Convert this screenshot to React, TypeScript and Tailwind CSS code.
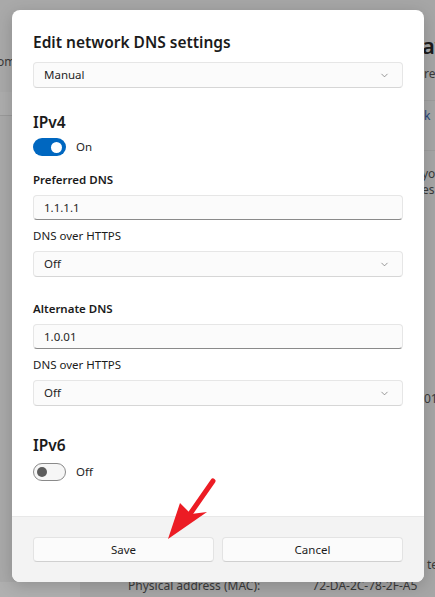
import { ChevronDown } from "lucide-react"

const font = { fontFamily: '"Segoe UI", "Noto Sans", Arial, sans-serif' }

function Select({ value }: { value: string }) {
  return (
    <div className="flex h-[26px] items-center justify-between rounded-[4px] border border-[#e6e6e6] border-b-[#d6d6d6] bg-[#fbfbfb] pl-[10px] pr-[12px]">
      <span className="text-[11.5px] text-[#1f1f1f]">{value}</span>
      <ChevronDown size={11} strokeWidth={1.5} className="text-[#6b6b6b]" />
    </div>
  )
}

function Input({ value }: { value: string }) {
  return (
    <div className="flex h-[25px] items-center rounded-[4px] border border-[#e6e6e6] border-b-[#8a8a8a] bg-[#fbfbfb] pl-[10px]">
      <span className="text-[11.5px] text-[#1f1f1f]">{value}</span>
    </div>
  )
}

function Toggle({ on }: { on: boolean }) {
  return (
    <div className="flex items-center gap-[10px]">
      {on ? (
        <div className="flex h-[18px] w-[33px] items-center justify-end rounded-full bg-[#0067c0] pr-[4px]">
          <div className="h-[11px] w-[11px] rounded-full bg-white" />
        </div>
      ) : (
        <div className="flex h-[18px] w-[33px] items-center rounded-full border border-[#8a8a8a] bg-[#f6f6f6] pl-[3px]">
          <div className="h-[10px] w-[10px] rounded-full bg-[#5c5c5c]" />
        </div>
      )}
      <span className="text-[11.5px] text-[#1f1f1f]">{on ? "On" : "Off"}</span>
    </div>
  )
}

export default function App() {
  return (
    <div className="relative flex h-[597px] w-[435px] overflow-hidden bg-[#a6a6a6]" style={font}>
      {/* dimmed settings page behind the dialog */}
      <div className="flex w-[80px] shrink-0 flex-col bg-[#a9a9a9]">
        <div className="ml-[-28px] mt-[53px] whitespace-nowrap text-[12px] text-[#3a3a3a]">Custom</div>
        <div className="mt-[21px] h-[24px] border-b border-[#9a9a9a] bg-[#adadad]" />
        <div className="mt-auto h-[15px] bg-[#b0b0b0]" />
      </div>
      <div className="flex flex-1 flex-col">
        <div className="flex flex-col whitespace-nowrap pl-[342px] text-[#3a3a3a]">
          <div className="mt-[31px] text-[22px] font-semibold leading-[28px] text-[#1c1c1c]">av</div>
          <div className="mt-[7px] pl-[2px] text-[12px] leading-[16px]">re</div>
          <div className="mt-[18px] border-t border-[#9d9d9d] pl-[2px] pt-[7px] text-[12px] leading-[16px] text-[#27457a]">k</div>
          <div className="mt-[26px] border-t border-[#9d9d9d] pt-[15px] text-[12px] leading-[16px]">you</div>
          <div className="text-[12px] leading-[16px]">es</div>
          <div className="mt-[193px] pl-[2px] text-[12px] leading-[16px]">01</div>
        </div>
        <div className="mt-auto flex whitespace-nowrap pb-[3px] text-[12px] leading-[16px] text-[#3a3a3a]">
          <div className="flex flex-col">
            <div className="mb-[5px] ml-[347px]">ted</div>
            <div className="flex">
              <span className="ml-[48px]">Physical address (MAC):</span>
              <span className="ml-[52px]">72-DA-2C-78-2F-A5</span>
            </div>
          </div>
        </div>
      </div>

      {/* dialog */}
      <div className="absolute left-[12px] top-[10px] flex h-[572px] w-[412px] flex-col overflow-hidden rounded-[8px] bg-white shadow-[0_4px_16px_rgba(0,0,0,0.18)]">
        <div className="flex flex-1 flex-col px-[21px] pt-[20px]">
          <div className="text-[15.5px] font-semibold leading-[24px] text-[#1b1b1b]">Edit network DNS settings</div>
          <div className="mt-[8px]">
            <Select value="Manual" />
          </div>
          <div className="mt-[22px] text-[15.5px] font-semibold leading-[24px] text-[#1b1b1b]">IPv4</div>
          <div className="mt-[4px]">
            <Toggle on />
          </div>
          <div className="mt-[16px] text-[11.5px] font-semibold leading-[16px] text-[#1b1b1b]">Preferred DNS</div>
          <div className="mt-[7px]">
            <Input value="1.1.1.1" />
          </div>
          <div className="mt-[8px] text-[11.5px] leading-[16px] text-[#1b1b1b]">DNS over HTTPS</div>
          <div className="mt-[7px]">
            <Select value="Off" />
          </div>
          <div className="mt-[24px] text-[11.5px] font-semibold leading-[16px] text-[#1b1b1b]">Alternate DNS</div>
          <div className="mt-[7px]">
            <Input value="1.0.01" />
          </div>
          <div className="mt-[8px] text-[11.5px] leading-[16px] text-[#1b1b1b]">DNS over HTTPS</div>
          <div className="mt-[7px]">
            <Select value="Off" />
          </div>
          <div className="mt-[27px] text-[15.5px] font-semibold leading-[24px] text-[#1b1b1b]">IPv6</div>
          <div className="mt-[6px]">
            <Toggle on={false} />
          </div>
        </div>
        <div className="flex h-[66px] shrink-0 gap-[8px] border-t border-[#e8e8e8] bg-[#f3f3f3] px-[21px] pt-[20px]">
          <button className="h-[25px] flex-1 rounded-[4px] border border-[#e3e3e3] border-b-[#d0d0d0] bg-[#fbfbfb] text-[11.5px] text-[#1b1b1b]">
            Save
          </button>
          <button className="h-[25px] flex-1 rounded-[4px] border border-[#e3e3e3] border-b-[#d0d0d0] bg-[#fbfbfb] text-[11.5px] text-[#1b1b1b]">
            Cancel
          </button>
        </div>
      </div>

      {/* red annotation arrow */}
      <svg className="pointer-events-none absolute left-0 top-0" width="435" height="597" viewBox="0 0 435 597">
        <line x1="213" y1="481" x2="190" y2="514" stroke="#ec1c24" strokeWidth="5" strokeLinecap="round" />
        <polygon points="168,539 180,503 191,514 207,512" fill="#ec1c24" />
      </svg>
    </div>
  )
}
